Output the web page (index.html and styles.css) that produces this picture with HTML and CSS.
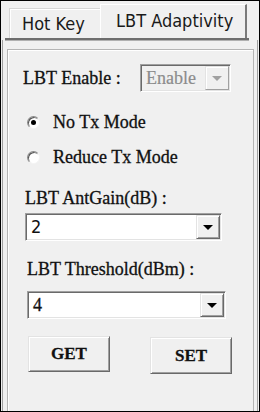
FILE: index.html
```html
<!DOCTYPE html>
<html lang="en">
<head>
    <meta charset="UTF-8">
    <title>LBT Adaptivity</title>
    <link rel="stylesheet" href="styles.css">
</head>
<body>
    <div class="window">
        <div class="tabs">
            <div class="tab">Hot Key</div>
            <div class="tab tab-active">LBT Adaptivity</div>
        </div>

        <div class="page">
            <div class="group">
                <div class="enable-row">
                    <span class="enable-label">LBT Enable :</span>
                    <div class="combo combo-disabled">
                        <span class="combo-value">Enable</span>
                        <span class="combo-btn"><span class="arrow"></span></span>
                    </div>
                </div>

                <div class="radios">
                    <label class="radio-row">
                        <span class="radio checked"></span>
                        <span>No Tx Mode</span>
                    </label>
                    <label class="radio-row">
                        <span class="radio"></span>
                        <span>Reduce Tx Mode</span>
                    </label>
                </div>

                <div class="field field-gain">
                    <div class="field-label">LBT AntGain(dB) :</div>
                    <div class="combo">
                        <span class="combo-value value-sans">2</span>
                        <span class="combo-btn"><span class="arrow"></span></span>
                    </div>
                </div>

                <div class="field field-threshold">
                    <div class="field-label">LBT Threshold(dBm) :</div>
                    <div class="combo">
                        <span class="combo-value">4</span>
                        <span class="combo-btn"><span class="arrow"></span></span>
                    </div>
                </div>

                <div class="actions">
                    <button class="btn">GET</button>
                    <button class="btn btn-set">SET</button>
                </div>
            </div>
        </div>
    </div>
</body>
</html>
```

FILE: styles.css
```css
* {
    margin: 0;
    padding: 0;
    box-sizing: border-box;
}

body {
    background: #f0f0f0;
    font-family: 'Liberation Serif', 'Times New Roman', serif;
    color: #111;
}

.window {
    width: 260px;
    height: 412px;
    border: 1px solid #000;
    background: #f0f0f0;
    display: flex;
    flex-direction: column;
    overflow: hidden;
}

/* tab strip */
.tabs {
    display: flex;
    align-items: flex-end;
    height: 39px;
    margin: 0 10px 0 4px;
    padding-left: 4px;
    border-bottom: 2px solid #6e6e6e;
    box-shadow: 0 1px 0 #b0b0b0;
    font-family: 'DejaVu Sans Condensed', 'DejaVu Sans', sans-serif;
    font-stretch: condensed;
    font-size: 18px;
    line-height: 20px;
    color: #1a1a1a;
}

.tab {
    height: 30px;
    width: 91px;
    padding: 5px 0 0 12px;
    border-top: 1px solid #d6d6d6;
    border-left: 1px solid #d6d6d6;
    box-shadow: inset 1px 1px 0 #fff;
    white-space: nowrap;
}

.tab-active {
    height: 34px;
    width: 147px;
    padding: 6px 0 0 15px;
    border-top: 1px solid #fff;
    border-left: 1px solid #fff;
    border-right: 2px solid #7a7a7a;
    box-shadow: none;
}

/* page + group box */
.page {
    flex: 1;
    display: flex;
    flex-direction: column;
    margin: 0 1px;
    padding: 9px 3px 0 4px;
    border-left: 1px solid #a0a0a0;
    border-right: 1px solid #a0a0a0;
}

.group {
    flex: 1;
    margin-bottom: -6px;
    padding: 14px 0 0 15px;
    border: 1px solid #b4b4b4;
    box-shadow: inset 1px 1px 0 #fff;
    font-size: 18px;
    line-height: 20px;
    -webkit-text-stroke: 0.3px #111;
}

.enable-row {
    display: flex;
    align-items: center;
}

.enable-label {
    width: 117px;
    white-space: nowrap;
}

/* radios */
.radios {
    display: flex;
    flex-direction: column;
    gap: 15px;
    margin: 20px 0 0 4px;
}

.radio-row {
    display: flex;
    align-items: center;
    gap: 13px;
}

.radio {
    width: 13px;
    height: 13px;
    border-radius: 50%;
    border: 1px solid;
    border-color: #8a8a8a #f4f4f4 #f4f4f4 #8a8a8a;
    background: #fff;
    box-shadow: inset 1px 1px 0 #555;
    display: flex;
    align-items: center;
    justify-content: center;
}

.radio.checked::after {
    content: "";
    width: 5px;
    height: 5px;
    border-radius: 50%;
    background: #000;
}

/* fields */
.field-gain {
    margin: 21px 0 0 2px;
}

.field-threshold {
    margin: 18px 0 0 4px;
}

.field-label {
    white-space: nowrap;
}

.field-gain .combo {
    margin-top: 5px;
    width: 197px;
}

.field-threshold .combo {
    margin-top: 12px;
    width: 199px;
}

.combo {
    display: flex;
    height: 28px;
    padding: 1px;
    border: 1px solid;
    border-color: #a0a0a0 #fff #fff #a0a0a0;
    box-shadow: inset 1px 1px 0 #6a6a6a, inset -1px -1px 0 #e3e3e3;
    background: #fff;
}

.combo-disabled {
    width: 91px;
    background: #f0f0f0;
    color: #8c8c8c;
    -webkit-text-stroke: 0.2px #8c8c8c;
}

.combo-value {
    flex: 1;
    padding-left: 4px;
    line-height: 24px;
}

.value-sans {
    font-family: 'DejaVu Sans Condensed', 'DejaVu Sans', sans-serif;
    font-stretch: condensed;
    -webkit-text-stroke: 0;
}

.combo-btn {
    width: 24px;
    display: flex;
    align-items: center;
    justify-content: center;
    background: #f0f0f0;
    border: 1px solid;
    border-color: #e3e3e3 #696969 #696969 #e3e3e3;
    box-shadow: inset 1px 1px 0 #fff, inset -1px -1px 0 #a0a0a0;
}

.arrow {
    width: 0;
    height: 0;
    border-left: 5px solid transparent;
    border-right: 5px solid transparent;
    border-top: 5px solid #000;
}

.combo-disabled .combo-btn {
    border-color: #e3e3e3 #a0a0a0 #a0a0a0 #e3e3e3;
    box-shadow: inset 1px 1px 0 #fff;
}

.combo-disabled .arrow {
    border-top-color: #a0a0a0;
}

/* buttons */
.actions {
    display: flex;
    align-items: flex-start;
    gap: 40px;
    margin: 17px 0 0 5px;
}

.btn {
    width: 82px;
    height: 36px;
    font-family: 'Liberation Serif', 'Times New Roman', serif;
    font-size: 17px;
    font-weight: 700;
    color: #111;
    background: #f0f0f0;
    border: 1px solid;
    border-color: #e3e3e3 #696969 #696969 #e3e3e3;
    box-shadow: inset 1px 1px 0 #fff, inset -1px -1px 0 #a0a0a0;
}

.btn-set {
    height: 37px;
    margin-top: 1px;
}
```
